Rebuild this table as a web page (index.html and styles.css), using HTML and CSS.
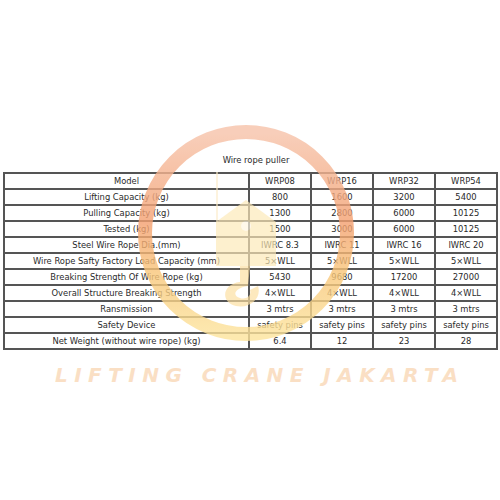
FILE: index.html
```html
<!DOCTYPE html>
<html>
<head>
<meta charset="utf-8">
<link rel="stylesheet" href="styles.css">
</head>
<body>
<div class="page">
  <div class="caption">Wire rope puller</div>
  <table class="spec">
    <colgroup>
      <col class="c-name"><col class="c-val"><col class="c-val"><col class="c-val"><col class="c-val">
    </colgroup>
    <tr><td>Model</td><td>WRP08</td><td>WRP16</td><td>WRP32</td><td>WRP54</td></tr>
    <tr><td>Lifting Capacity (kg)</td><td>800</td><td>1600</td><td>3200</td><td>5400</td></tr>
    <tr><td>Pulling Capacity (kg)</td><td>1300</td><td>2800</td><td>6000</td><td>10125</td></tr>
    <tr><td>Tested (kg)</td><td>1500</td><td>3000</td><td>6000</td><td>10125</td></tr>
    <tr><td>Steel Wire Rope Dia.(mm)</td><td>IWRC 8.3</td><td>IWRC 11</td><td>IWRC 16</td><td>IWRC 20</td></tr>
    <tr><td>Wire Rope Safty Factory Load Capacity (mm)</td><td>5×WLL</td><td>5×WLL</td><td>5×WLL</td><td>5×WLL</td></tr>
    <tr><td>Breaking Strength Of Wire Rope (kg)</td><td>5430</td><td>9680</td><td>17200</td><td>27000</td></tr>
    <tr><td>Overall Structure Breaking Strength</td><td>4×WLL</td><td>4×WLL</td><td>4×WLL</td><td>4×WLL</td></tr>
    <tr><td>Ransmission</td><td>3 mtrs</td><td>3 mtrs</td><td>3 mtrs</td><td>3 mtrs</td></tr>
    <tr><td>Safety Device</td><td>safety pins</td><td>safety pins</td><td>safety pins</td><td>safety pins</td></tr>
    <tr><td>Net Weight (without wire rope) (kg)</td><td>6.4</td><td>12</td><td>23</td><td>28</td></tr>
  </table>
  <svg class="watermark" width="500" height="500" viewBox="0 0 500 500">
    <defs>
      <linearGradient id="ring" x1="0" y1="0" x2="0" y2="1">
        <stop offset="0" stop-color="#f7c3aa"/>
        <stop offset="0.45" stop-color="#f4a070"/>
        <stop offset="0.7" stop-color="#f9c77a"/>
        <stop offset="1" stop-color="#fde49c"/>
      </linearGradient>
    </defs>
    <circle cx="246" cy="233" r="101" fill="none" stroke="url(#ring)" stroke-width="14"/>
    <line x1="217" y1="172" x2="217" y2="222" stroke="#fcecc8" stroke-width="1.5"/>
    <g class="hook">
      <path d="M246 200 L276 222 L276 266 L216 266 L216 222 Z" fill="#fdeab8"/>
      <circle cx="246" cy="226" r="5" fill="#fff6e2"/>
      <path d="M240 266 L240 282 C222 284 220 302 236 306 C250 309 262 298 258 286 L250 290 C252 296 246 300 240 298 C232 296 234 288 248 286 L250 266 Z" fill="#fde0a2"/>
    </g>
    <text x="55" y="382" textLength="403" lengthAdjust="spacing" class="wm-text">LIFTING CRANE JAKARTA</text>
  </svg>
</div>
</body>
</html>
```
FILE: styles.css
```css
html, body {
  margin: 0;
  padding: 0;
  background: #ffffff;
}
.page {
  position: relative;
  width: 500px;
  height: 500px;
  font-family: "DejaVu Sans Condensed", "DejaVu Sans", sans-serif;
  font-size: 9.3px;
  color: #2a2a2a;
}
.caption {
  padding-top: 154px;
  height: 18px;
  line-height: 12px;
  box-sizing: content-box;
  text-align: center;
  padding-left: 12px;
}
.spec {
  margin-left: 3px;
  width: 493px;
  table-layout: fixed;
  border-collapse: separate;
  border-spacing: 0;
  border: 1px solid #555;
  font-size: 9.3px;
}
.c-name { width: 245px; }
.c-val { width: 62px; }
.spec td {
  border: 1px solid #555;
  padding: 0;
  height: 14px;
  line-height: 14px;
  text-align: center;
  white-space: nowrap;
  overflow: hidden;
}
.watermark {
  position: absolute;
  left: 0;
  top: 0;
  opacity: 0.8;
  pointer-events: none;
}
.hook {
  opacity: 0.85;
}
.wm-text {
  font-family: "DejaVu Sans", sans-serif;
  font-weight: bold;
  font-style: italic;
  font-size: 20px;
  fill: #fad8b6;
}
```
